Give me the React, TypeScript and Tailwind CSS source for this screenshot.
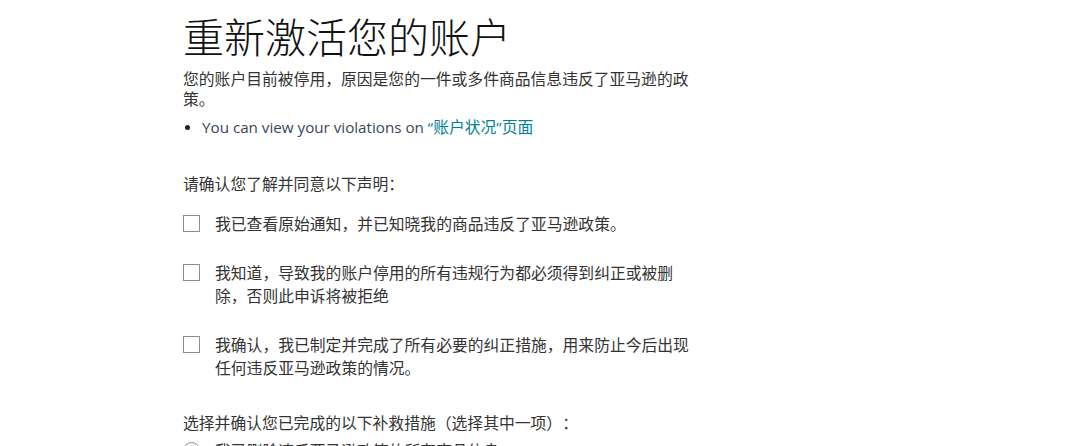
import React from "react";

function Box() {
  return (
    <span className="mt-[3px] h-[17px] w-[17px] shrink-0 border-[1.5px] border-[#8d8d8d] bg-white" />
  );
}

export default function App() {
  return (
    <div className="min-h-[446px] w-[1080px] overflow-hidden bg-white font-['Noto_Sans_CJK_SC','Noto_Sans',sans-serif] [text-spacing-trim:space-all]">
      <div className="w-[700px] pl-[183px] pt-[11px] text-[#333333]">
        <h1 className="text-[41px] leading-[48px] font-light text-[#111111]">重新激活您的账户</h1>
        <p className="mt-[10px] text-[15.8px] leading-[20px]">
          您的账户目前被停用，原因是您的一件或多件商品信息违反了亚马逊的政策。
        </p>
        <div className="mt-[8px] flex items-center text-[15.8px] leading-[20px]">
          <span className="ml-[2px] h-[5px] w-[5px] rounded-full bg-[#222]" />
          <span className="ml-[12px] font-['Open_Sans','Noto_Sans_CJK_SC',sans-serif] text-[15.2px] text-[#37475a]">
            You can view your violations on{" "}
            <span className="text-[#008296]">
              “<span className="font-['Noto_Sans_CJK_SC',sans-serif] text-[15.8px]">账户状况</span>”
              <span className="font-['Noto_Sans_CJK_SC',sans-serif] text-[15.8px]">页面</span>
            </span>
          </span>
        </div>
        <p className="mt-[37px] text-[15.8px] leading-[20px]">请确认您了解并同意以下声明：</p>
        <div className="mt-[18px] flex gap-[15px] text-[15.8px] leading-[23px]">
          <Box />
          <span>我已查看原始通知，并已知晓我的商品违反了亚马逊政策。</span>
        </div>
        <div className="mt-[26px] flex gap-[15px] text-[15.8px] leading-[23px]">
          <Box />
          <span>我知道，导致我的账户停用的所有违规行为都必须得到纠正或被删除，否则此申诉将被拒绝</span>
        </div>
        <div className="mt-[26px] flex gap-[15px] text-[15.8px] leading-[23px]">
          <Box />
          <span>我确认，我已制定并完成了所有必要的纠正措施，用来防止今后出现任何违反亚马逊政策的情况。</span>
        </div>
        <p className="mt-[34px] text-[15.8px] leading-[20px]">选择并确认您已完成的以下补救措施（选择其中一项）：</p>
        <div className="mt-[6px] flex gap-[15px] text-[15.8px] leading-[23px]">
          <span className="mt-[3px] h-[17px] w-[17px] shrink-0 rounded-full border-[1.5px] border-[#8d8d8d]" />
          <span>我已删除违反亚马逊政策的所有商品信息。</span>
        </div>
      </div>
    </div>
  );
}
